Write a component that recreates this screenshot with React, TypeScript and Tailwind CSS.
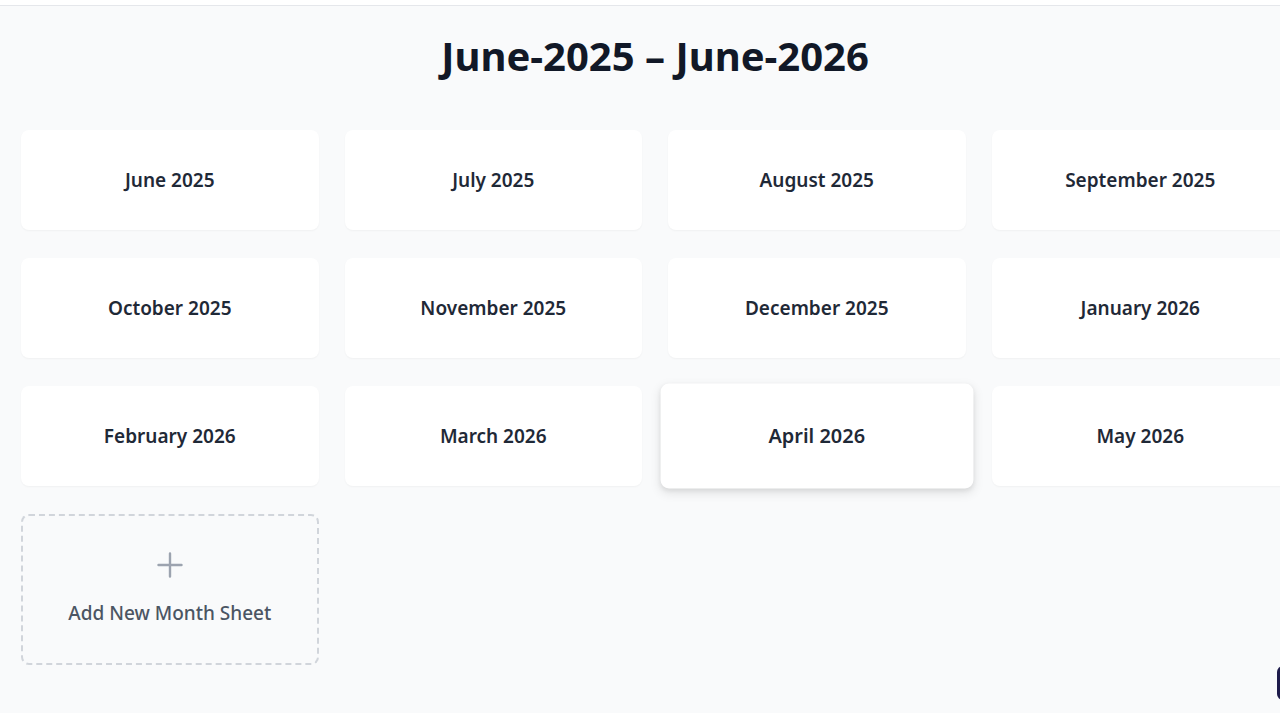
import React from "react";

const months = [
  "June 2025",
  "July 2025",
  "August 2025",
  "September 2025",
  "October 2025",
  "November 2025",
  "December 2025",
  "January 2026",
  "February 2026",
  "March 2026",
  "April 2026",
  "May 2026",
];

export default function App() {
  return (
    <div
      className="w-[1280px] h-[713px] overflow-hidden bg-[#f9fafb] relative"
      style={{ fontFamily: '"Noto Sans", "Open Sans", Arial, sans-serif' }}
    >
      <div className="h-[6px] bg-white border-b border-[#e5e7eb]" />
      <div className="w-[1310px] px-[21px] pt-[28px]">
        <h1 className="text-center text-[40px] leading-[44px] font-bold text-[#111827] mb-[52px]">
          June-2025 – June-2026
        </h1>
        <div className="grid grid-cols-[repeat(4,297.5px)] gap-x-[26px] gap-y-[28px]">
          {months.map((m) => {
            const hovered = m === "April 2026";
            return (
              <div
                key={m}
                className={
                  hovered
                    ? "h-[100px] bg-white rounded-lg flex items-center justify-center scale-105 shadow-[0_4px_10px_rgba(0,0,0,0.1),0_2px_4px_rgba(0,0,0,0.06)]"
                    : "h-[100px] bg-white rounded-lg flex items-center justify-center shadow-[0_1px_2px_rgba(0,0,0,0.04)]"
                }
              >
                <span className="text-[19px] font-semibold text-[#1f2937]">{m}</span>
              </div>
            );
          })}
          <div className="h-[151px] rounded-lg border-2 border-dashed border-[#d1d5db] flex flex-col items-center justify-center gap-[21px]">
            <svg width="26" height="26" viewBox="0 0 26 26" fill="none" stroke="#9ca3af" strokeWidth="2.4" strokeLinecap="round">
              <path d="M13 1.5v23M1.5 13h23" />
            </svg>
            <span className="text-[19px] font-medium text-[#4b5563]">Add New Month Sheet</span>
          </div>
        </div>
      </div>
      <div className="absolute left-[1277px] top-[666px] w-[20px] h-[34px] rounded-md bg-[#1e1b4b]" />
    </div>
  );
}
